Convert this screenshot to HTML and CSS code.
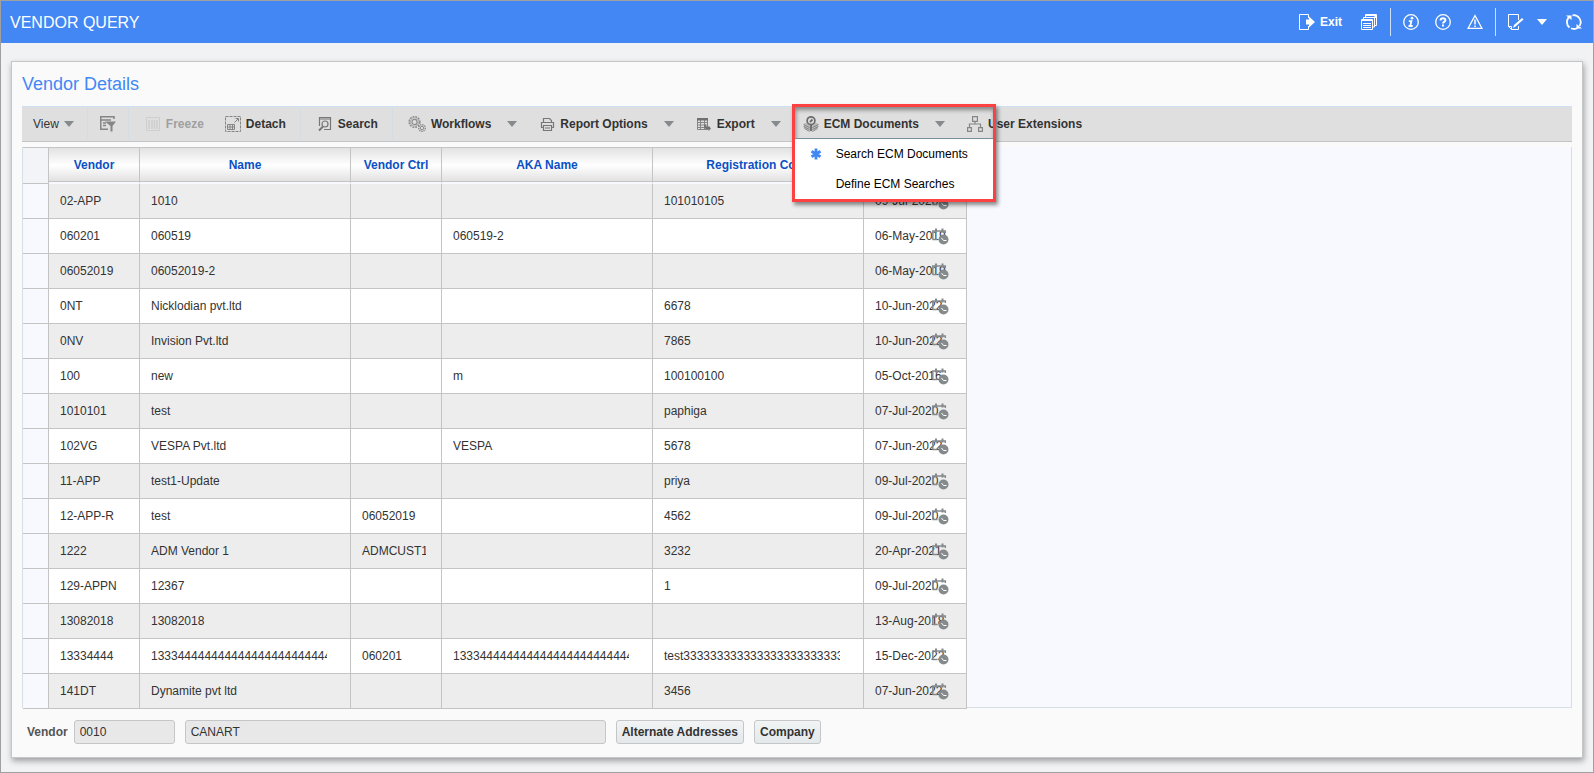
FILE: index.html
```html
<!DOCTYPE html>
<html lang="en">

<head>
    <meta charset="utf-8">
    <meta name="viewport" content="width=device-width, initial-scale=1">
    <title>Vendor Query</title>
    <link rel="stylesheet" href="styles.css">
</head>

<body>
    <header class="topbar">
        <h1>VENDOR QUERY</h1>
        <nav class="top-actions">
            <button class="top-btn" type="button">
                <svg width="16" height="16" viewBox="0 0 16 16"><path d="M9.500 4V.500H.500v15h9V12" fill="none" stroke="#fff"/><path d="M7 5.500h3V2.500l6 5.500-6 5.500v-3H7z" fill="#fff"/></svg>
                <b>Exit</b>
            </button>
            <button class="top-btn windows" type="button" aria-label="Windows">
                <svg width="16" height="16" viewBox="0 0 16 16" fill="none" stroke="#fff"><path d="M4.500 3V.500h11v11H14M4.500 1.500h11M2.500 5V3.500h11v9.500H12M.500 5.500h11v10H.500z"/><path d="M0 6.500h12M2 9.500h8M2 11.500h8M2 13.500h8"/><path d="M12 4l3-3v3z" fill="#fff" stroke="none"/></svg>
            </button>
            <span class="top-sep first"></span>
            <button class="top-btn" type="button" aria-label="Information">
                <svg width="16" height="16" viewBox="0 0 16 16"><circle cx="8" cy="8" r="7.300" fill="none" stroke="#fff" stroke-width="1.300"/><circle cx="9" cy="4.200" r="1.400" fill="#fff"/><path d="M5.800 7.200h2.600L7.200 12M5.500 12h4.200" fill="none" stroke="#fff" stroke-width="1.800"/></svg>
            </button>
            <button class="top-btn" type="button" aria-label="Help">
                <svg width="16" height="16" viewBox="0 0 16 16"><circle cx="8" cy="8" r="7.300" fill="none" stroke="#fff" stroke-width="1.300"/><path d="M5.600 6.400Q5.600 4.200 8 4.200t2.400 1.900q0 1.100-1.200 1.700T8 9.600" fill="none" stroke="#fff" stroke-width="2"/><path d="M7 10.600h2v1.900H7z" fill="#fff"/></svg>
            </button>
            <button class="top-btn" type="button" aria-label="Warnings">
                <svg width="16" height="16" viewBox="0 0 16 16"><path d="M8 1.600L15 14.400H1z" fill="none" stroke="#fff" stroke-width="1.200"/><path d="M8 5.500v5M8 11.500v1.500" stroke="#fff" stroke-width="1.500"/></svg>
            </button>
            <span class="top-sep"></span>
            <button class="top-btn" type="button" aria-label="Edit">
                <svg width="16" height="16" viewBox="0 0 16 16"><path d="M10.500 6V.500H.500v12l3 3h7V12M.500 12.500h3v3" fill="none" stroke="#fff"/><path d="M5 14l1-3 8-7 1.500 1.500-8 7z" fill="#fff"/></svg>
            </button>
            <button class="top-btn more" type="button" aria-label="More"><span class="caret white"></span></button>
            <button class="top-btn refresh" type="button" aria-label="Refresh">
                <svg width="16" height="16" viewBox="0 0 16 16"><path d="M3.500 13.500A7 7 0 0 1 4 2.300M6.500 1.300A7 7 0 0 1 13.500 12M11.500 14A7 7 0 0 1 5 14.300" fill="none" stroke="#fff" stroke-width="1.800"/><path d="M0 1.500h5.500V6zM16 14.500h-5.500V10z" fill="#fff"/></svg>
            </button>
        </nav>
    </header>

    <main class="panel">
        <h2>Vendor Details</h2>

        <div class="toolbar">
            <div class="tb-group view">
                <button class="tb-btn plain" type="button">View <span class="caret"></span></button>
            </div>
            <div class="tb-group filter">
                <button class="tb-btn" type="button" aria-label="Query by example">
                    <svg width="16" height="16" viewBox="0 0 16 16"><path d="M14 3V.800H.800v12.400H8M1 4h10M3 7h3M3 9.500h3" fill="none" stroke="#858585" stroke-width="1.500"/><path d="M5 5.500h11L12.500 10v5.500h-2V10z" fill="#858585"/></svg>
                </button>
            </div>
            <div class="tb-group">
                <button class="tb-btn" type="button" disabled>
                    <svg width="16" height="16" viewBox="0 0 16 16"><path d="M1.500 1.500h13v13h-13z" fill="none" stroke="#cecece"/><path d="M4 4v9M7 4v9M9.500 4v9M12 4v9" stroke="#cecece" stroke-width="1.500"/></svg>
                    Freeze
                </button>
                <button class="tb-btn" type="button">
                    <svg width="16" height="16" viewBox="0 0 16 16" fill="none" stroke="#858585"><path d="M.500.500h15v15H.500z" stroke-dasharray="3 1"/><path d="M2.500 8.500h7v5h-7zM2 11h8M5 8v6M7.500 8v6M9.500 6.500l4-4M10.500 2.500h3v3"/></svg>
                    Detach
                </button>
            </div>
            <div class="tb-group">
                <button class="tb-btn" type="button">
                    <svg width="16" height="16" viewBox="0 0 16 16" fill="none" stroke="#777"><path d="M2.500 10V1.500h11v12H7M2 3h12" stroke-width="1.200"/><circle cx="8" cy="8" r="3" stroke-width="1.200"/><path d="M6 10.500L2 14.500" stroke-width="2"/></svg>
                    Search
                </button>
            </div>
            <div class="tb-group menus">
                <div class="split">
                    <button class="tb-btn" type="button">
                        <svg width="18" height="16" viewBox="0 0 18 16" fill="none" stroke="#8c8c8c"><circle cx="6.500" cy="6" r="5.300" stroke-width="1.600" stroke-dasharray="1.800 1"/><circle cx="6.500" cy="6" r="4.300" stroke="#aaa"/><circle cx="6.500" cy="6" r="2.600" stroke-width="1.200"/><circle cx="14" cy="12" r="3.300" stroke-width="1.400" stroke-dasharray="1.400 .800"/><circle cx="14" cy="12" r="1.700"/></svg>
                        Workflows
                    </button>
                    <button class="tb-btn" type="button" aria-label="Workflows menu"><span class="caret"></span></button>
                </div>
                <div class="split">
                    <button class="tb-btn" type="button">
                        <svg width="16" height="16" viewBox="0 0 16 16" fill="none" stroke="#777"><path d="M4.500 6V2.500h6l2 2V6M4 11.500H2.500v-5h12v5H13M4.500 9.500h8v5h-8zM6 12h5" stroke-width="1.200"/></svg>
                        Report Options
                    </button>
                    <button class="tb-btn" type="button" aria-label="Report Options menu"><span class="caret"></span></button>
                </div>
                <div class="split">
                    <button class="tb-btn" type="button">
                        <svg width="16" height="16" viewBox="0 0 16 16"><path d="M1.500 2.500h10v11h-10zM1 6.500h11M1 9h11M1 11.500h11M4.500 4v10M8.500 4v10" fill="none" stroke="#858585"/><path d="M1 2h11v2.500H1zM9.500 8.500q.500 2.500 3 2.500V9.500l2.500 3-2.500 2.500v-1.500Q8 13.500 8 9z" fill="#707070"/></svg>
                        Export
                    </button>
                    <button class="tb-btn" type="button" aria-label="Export menu"><span class="caret"></span></button>
                </div>
                <div class="split ecm">
                    <button class="tb-btn" type="button">
                        <svg width="16" height="16" viewBox="0 0 16 16"><path d="M1 7.500l3.500-1 3.500 4v5l-7-3.500zM15 7.500l-3.500-1-3.500 4v5l7-3.500z" fill="#bbb"/><path d="M.500 8.500l6 3M.500 10.500l6 3M1.500 12.500l5 3M15.500 8.500l-6 3M15.500 10.500l-6 3M14.500 12.500l-5 3" stroke="#858585"/><circle cx="8" cy="4.700" r="3.900" fill="#ddd" stroke="#6c6c6c" stroke-width="1.700"/><path d="M7 6l2.500-2.500M8 9v6" fill="none" stroke="#6c6c6c" stroke-width="1.800"/></svg>
                        ECM Documents
                    </button>
                    <button class="tb-btn" type="button" aria-label="ECM Documents menu" aria-expanded="true"><span class="caret"></span></button>
                    <div class="menu-frame">
                        <ul class="menu">
                            <li><a href="#"><svg width="12" height="12" viewBox="0 0 12 12"><path d="M6 .500v11M1.500 3.300l9 5.400M1.500 8.700l9-5.400" stroke="#3f87f5" stroke-width="2.800"/></svg>Search ECM Documents</a></li>
                            <li><a href="#">Define ECM Searches</a></li>
                        </ul>
                    </div>
                </div>
                <button class="tb-btn" type="button">
                    <svg width="16" height="16" viewBox="0 0 16 16" fill="none" stroke="#858585" stroke-width="1.200"><path d="M5.600.600h4.800v4.800H5.600zM.600 11.600h3.800v3.800H.600zM11.600 11.600h3.800v3.800h-3.800zM8 5.500V8M2.500 11.500V8h11v3.500"/></svg>
                    User Extensions
                </button>
            </div>
        </div>

        <div class="grid">
            <table>
                <colgroup>
                    <col class="c-mark"><col class="c-short"><col class="c-long"><col class="c-short"><col class="c-long"><col class="c-long"><col class="c-date">
                </colgroup>
                <thead>
                    <tr><th class="mark"></th><th>Vendor</th><th>Name</th><th>Vendor Ctrl</th><th>AKA Name</th><th>Registration Code</th><th></th></tr>
                </thead>
                <tbody id="rows"></tbody>
            </table>
        </div>

        <form class="footer">
            <label for="vendor">Vendor</label>
            <input class="code" id="vendor" type="text" value="0010" readonly>
            <input class="name" type="text" value="CANART" aria-label="Vendor name" readonly>
            <button type="button">Alternate Addresses</button>
            <button type="button">Company</button>
        </form>
    </main>
    <script src="script.js"></script>
</body>

</html>
```
FILE: styles.css
```css
* {
    box-sizing: border-box;
}

body {
    margin: 0;
    min-height: 100vh;
    border: 1px solid #a0a0a0;
    background: #f1f2f4;
    color: #333;
    font: 12px/16px "Liberation Sans", Arial, sans-serif;
}

button,
input {
    font: inherit;
    color: inherit;
}

.topbar {
    display: flex;
    justify-content: space-between;
    align-items: center;
    height: 42px;
    padding: 0 11px 0 9px;
    background: #4387f5;
    color: #fff;
}

h1 {
    margin: 0;
    padding-top: 2px;
    font-size: 16px;
    line-height: 20px;
    font-weight: normal;
}

.top-actions {
    display: flex;
    align-items: center;
    gap: 16px;
}

.top-btn,
.tb-btn {
    display: flex;
    align-items: center;
    gap: 5px;
    padding: 0;
    border: 0;
    background: none;
    white-space: nowrap;
}

.top-sep {
    width: 1px;
    height: 28px;
    margin: 0 -4px;
    background: #cfe0fc;
}

.top-sep.first {
    margin-left: -3px;
}

.windows {
    margin-left: 3px;
}

.more {
    margin-left: -3px;
}

.refresh {
    margin-left: 3px;
}

.caret {
    border: 5px solid transparent;
    border-top: 6px solid #858a8d;
    border-bottom: 0;
}

.caret.white {
    border-top-color: #fff;
}

.panel {
    margin: 18px 10px 14px;
    padding: 0 10px 13px;
    border: 1px solid #c4c6c8;
    background: #fafafa;
    box-shadow: 1px 3px 6px rgba(0, 0, 0, .35);
}

h2 {
    margin: 0;
    padding: 12px 0;
    color: #4387f5;
    font-size: 18px;
    line-height: 20px;
    font-weight: normal;
}

.toolbar {
    display: flex;
    height: 36px;
    border-top: 1px solid #cfdff5;
    border-bottom: 1px solid #c4c4c4;
    background: #dfdfdf;
}

.tb-group {
    display: flex;
    align-items: center;
    gap: 21px;
    margin-bottom: 1px;
    padding: 0 14px 0 16px;
    border-right: 1px solid #d3dde3;
}

.tb-group.view {
    padding: 0 13px 0 11px;
}

.tb-group.filter {
    padding: 0 12px;
}

.tb-group.menus {
    gap: 22px;
    padding-left: 15px;
    border-right: 0;
}

.tb-btn {
    font-weight: bold;
}

.tb-btn.plain {
    font-weight: normal;
}

.tb-btn:disabled {
    color: #a0a0a0;
}

.split {
    display: flex;
    position: relative;
    align-items: center;
    gap: 16px;
}

/* open menu under ECM Documents, outlined together with its button */
.menu-frame {
    position: absolute;
    z-index: 1;
    top: -12px;
    left: -11px;
    width: 204px;
    padding-top: 31px;
    border: 3px solid #fb4142;
    box-shadow: 2px 3px 4px rgba(0, 0, 0, .45), inset 1px 3px 4px rgba(0, 0, 0, .4);
    pointer-events: none;
}

.menu {
    margin: 0;
    padding: 0;
    border-top: 1px solid #77909c;
    background: #fff;
    list-style: none;
    pointer-events: auto;
}

.menu a {
    display: flex;
    position: relative;
    align-items: center;
    height: 30px;
    padding-left: 41px;
    color: #000;
    text-decoration: none;
}

.menu svg {
    position: absolute;
    left: 15px;
}

.grid {
    margin-top: 5px;
    border: 1px solid #d6dfe6;
    border-top: 0;
    background: #f8f9fe;
}

table {
    width: 944px;
    margin-bottom: -2px;
    border-collapse: separate;
    border-spacing: 0;
    table-layout: fixed;
}

.c-mark {
    width: 26px;
}

.c-short {
    width: 91px;
}

.c-long {
    width: 211px;
}

.c-date {
    width: 103px;
}

th {
    height: 37px;
    padding: 0;
    border: solid #c4c4c4;
    border-width: 1px 1px 2px 0;
    border-bottom-color: #f8f9fe;
    background: linear-gradient(#e2e2e2, #fff 50%, #e0e0e0);
    box-shadow: inset 0 -1px #c4c4c4;
    color: #0b50c4;
}

th.mark {
    border-bottom: 1px solid #c4c4c4;
    background: #f3f4f8;
    box-shadow: none;
}

td {
    height: 35px;
    padding: 0 23px 0 11px;
    border: solid #c4c4c4;
    border-width: 0 1px 1px 0;
    background: #fff;
    white-space: nowrap;
}

tr:nth-child(odd) td {
    background: #ededed;
}

tbody tr td.mark {
    padding: 0;
    background: #f8f9fe;
}

td span {
    display: block;
    overflow: hidden;
}

td.short {
    padding-right: 15px;
}

td.date {
    position: relative;
}

td.date span {
    overflow: visible;
}

td.date svg {
    position: absolute;
    right: 17px;
    top: 9px;
}

.footer {
    display: flex;
    align-items: center;
    gap: 10px;
    margin-top: 12px;
    padding-left: 5px;
}

.footer label {
    margin-right: -4px;
    color: #555;
    font-weight: bold;
}

.footer input,
.footer button {
    height: 24px;
    border: 1px solid #c4c6c8;
    border-radius: 3px;
}

.footer input {
    padding: 0 5px;
    background: #e8e8e8;
}

.code {
    width: 101px;
}

.name {
    width: 421px;
}

.footer button {
    padding: 0 5px;
    background: linear-gradient(#f2f4f5, #e3e8eb);
    font-weight: bold;
}
```
FILE: script.js
```js
var rows = [
    ['02-APP', '1010', '', '', '101010105', '09-Jul-2020'],
    ['060201', '060519', '', '060519-2', '', '06-May-2019'],
    ['06052019', '06052019-2', '', '', '', '06-May-2019'],
    ['0NT', 'Nicklodian pvt.ltd', '', '', '6678', '10-Jun-2022'],
    ['0NV', 'Invision Pvt.ltd', '', '', '7865', '10-Jun-2022'],
    ['100', 'new', '', 'm', '100100100', '05-Oct-2016'],
    ['1010101', 'test', '', '', 'paphiga', '07-Jul-2020'],
    ['102VG', 'VESPA Pvt.ltd', '', 'VESPA', '5678', '07-Jun-2022'],
    ['11-APP', 'test1-Update', '', '', 'priya', '09-Jul-2020'],
    ['12-APP-R', 'test', '06052019', '', '4562', '09-Jul-2020'],
    ['1222', 'ADM Vendor 1', 'ADMCUST1', '', '3232', '20-Apr-2021'],
    ['129-APPN', '12367', '', '', '1', '09-Jul-2020'],
    ['13082018', '13082018', '', '', '', '13-Aug-2018'],
    ['13334444', '133344444444444444444444444444', '060201', '133344444444444444444444444444', 'test33333333333333333333333333', '15-Dec-2022'],
    ['141DT', 'Dynamite pvt ltd', '', '', '3456', '07-Jun-2022']
];
var classes = ['short', '', 'short', '', '', 'date'];
var calendar = '<svg width="17" height="17" viewBox="0 0 17 17">' +
    '<path d="M.800 11.500V3h12.500v2M.500 11.500h5" fill="none" stroke="#858a8d" stroke-width="1.500"/>' +
    '<path d="M4 .500v4M10.500.500v4" stroke="#858a8d" stroke-width="2"/>' +
    '<circle cx="11.500" cy="11.500" r="5" fill="#858a8d"/>' +
    '<path d="M9.500 10l2 2.500h3" fill="none" stroke="#fff"/></svg>';

var html = '';
rows.forEach(function (row) {
    html += '<tr><td class="mark"></td>';
    row.forEach(function (text, i) {
        html += '<td class="' + classes[i] + '"><span>' + text + '</span>' + (i == 5 ? calendar : '') + '</td>';
    });
    html += '</tr>';
});
document.getElementById('rows').innerHTML = html;
```
